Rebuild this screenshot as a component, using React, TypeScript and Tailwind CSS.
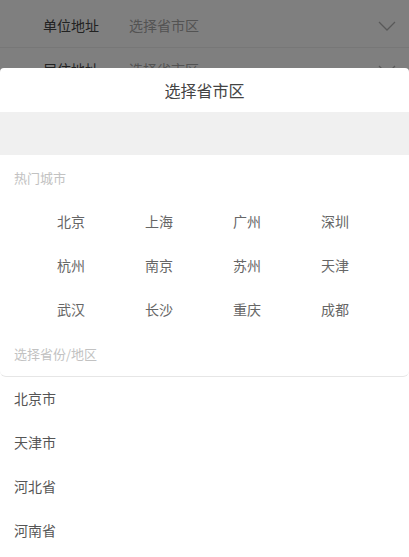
const hotCities = [
  "北京", "上海", "广州", "深圳",
  "杭州", "南京", "苏州", "天津",
  "武汉", "长沙", "重庆", "成都",
];

const provinces = ["北京市", "天津市", "河北省", "河南省"];

const fields = ["单位地址", "居住地址", "户籍地址"];

const ChevronDown = () => (
  <svg width="18" height="10" viewBox="0 0 18 10" fill="none">
    <path d="M1 1l8 8 8-8" stroke="#b3b3b3" strokeWidth="1.3" />
  </svg>
);

const App = () => {
  return (
    <div
      className="relative h-[557px] w-[409px] overflow-hidden bg-white"
      style={{ fontFamily: '"Noto Sans CJK SC", "Liberation Sans", sans-serif' }}
    >
      {/* page under the popup */}
      <div className="flex flex-col">
        {fields.map((f) => (
          <div key={f} className="flex h-[44px] items-center border-b border-[#eeeeee] pl-[43px] pr-[13px] first:mt-[4px]">
            <span className="w-[86px] text-[14px] text-[#444]">{f}</span>
            <span className="flex-1 text-[14px] text-[#a6a6a6]">选择省市区</span>
            <ChevronDown />
          </div>
        ))}
      </div>

      {/* mask */}
      <div className="absolute inset-0 bg-black/50" />

      {/* bottom sheet */}
      <div className="absolute inset-x-0 top-[68px] bottom-0 flex flex-col rounded-t-[4px] bg-white">
        <div className="rounded-b-[6px] border-b border-[#e6e6e6]">
          <div className="flex h-[44px] items-center justify-center text-[16px] text-[#444]">
            选择省市区
          </div>
          <div className="h-[43px] bg-[#f0f0f0]" />
          <div className="px-[14px] pt-[13px] text-[13px] text-[#c2c2c2]">热门城市</div>
          <div className="grid grid-cols-4 pl-[27px] pr-[30px] pt-[12px]">
            {hotCities.map((c) => (
              <div key={c} className="flex h-[44px] items-center justify-center text-[14px] text-[#666]">
                {c}
              </div>
            ))}
          </div>
          <div className="flex h-[44px] items-center px-[14px] text-[13px] text-[#c2c2c2]">
            选择省份/地区
          </div>
        </div>
        <div className="flex flex-col">
          {provinces.map((p) => (
            <div key={p} className="flex h-[44px] items-center px-[14px] text-[14px] text-[#555]">
              {p}
            </div>
          ))}
        </div>
      </div>
    </div>
  );
};

export default App;
